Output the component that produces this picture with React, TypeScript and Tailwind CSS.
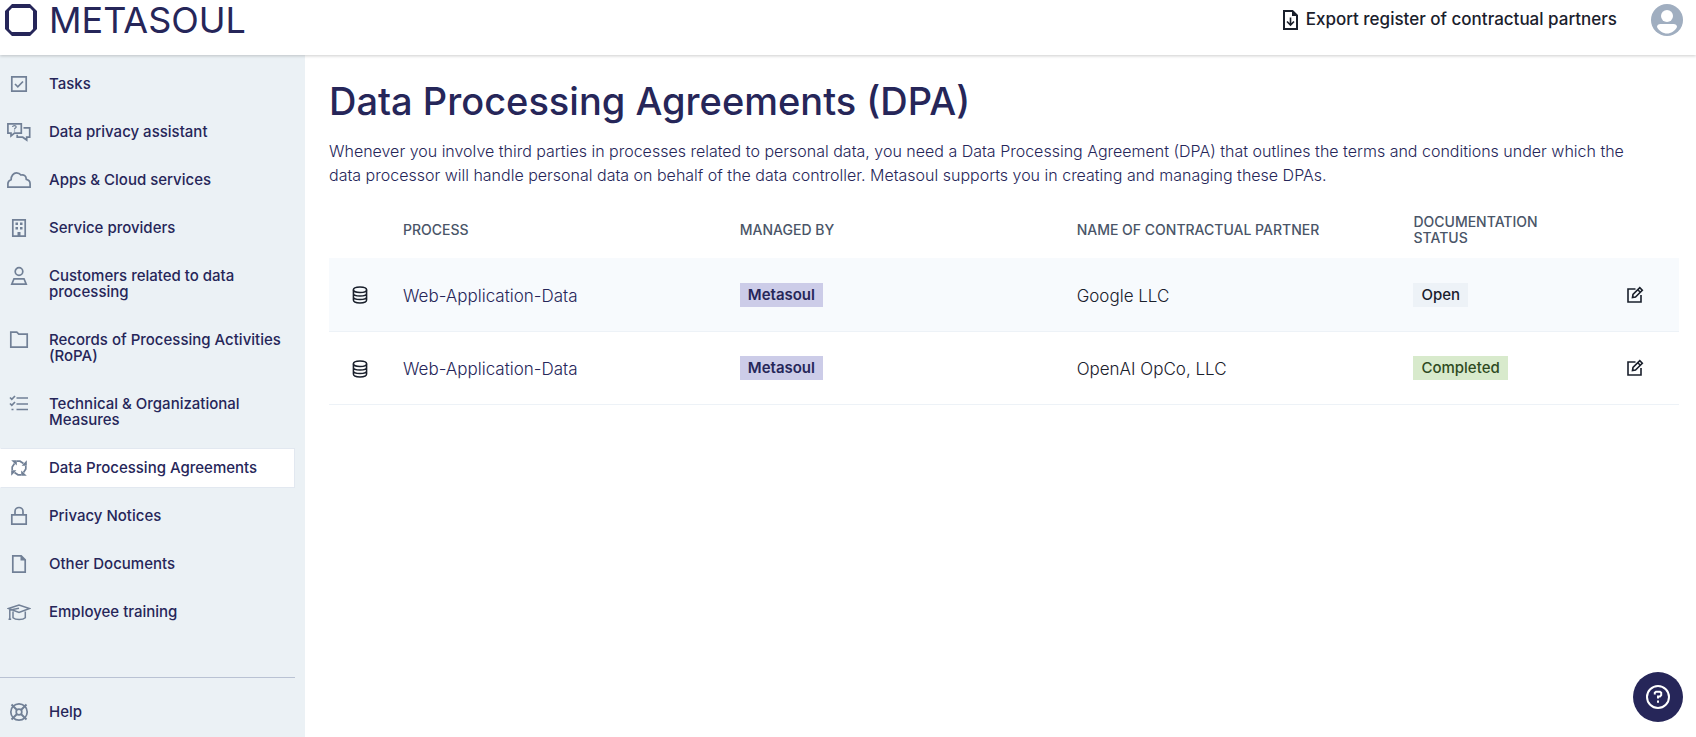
import type { ReactNode } from "react"

type NavItem = { label: string; icon: ReactNode; active?: boolean }

type Agreement = {
  process: string
  managedBy: string
  partner: string
  status: "Open" | "Completed"
}

function Icon({ children }: { children: ReactNode }) {
  return (
    <svg viewBox="0 0 24 24" fill="none" stroke="currentColor" strokeWidth="1.7" className="size-6 shrink-0" aria-hidden="true">
      {children}
    </svg>
  )
}

const navItems: NavItem[] = [
  {
    label: "Tasks",
    icon: (
      <Icon>
        <path d="M4.8 4.8h14.4v14.4H4.8zM8 12l2.8 2.8L16 9.5" />
      </Icon>
    ),
  },
  {
    label: "Data privacy assistant",
    icon: (
      <Icon>
        <path d="M.9 3.8h13.4v9.4H7.5L4 16v-2.8H.9zM16.5 7.8h6.2v9.4h-3V20l-4-2.8h-5.500v-2.500" />
        <path d="M5.600 6.900c0-1.700 3.600-1.700 3.600.1 0 1.100-1.700 1.100-1.700 2.400M7.500 10.400v1.200" strokeWidth="1.200" />
      </Icon>
    ),
  },
  {
    label: "Apps & Cloud services",
    icon: (
      <Icon>
        <path d="M.9 19.200v-3.400c0-2 1.300-3.600 3.200-4.100C3.900 8 6.600 4.800 9.500 4.800c2.100 0 3.500.9 4.500 2.200 3-.8 5.300 1.200 5.300 4.400 2.300.5 3.800 2 3.800 4.300v3.500z" />
      </Icon>
    ),
  },
  {
    label: "Service providers",
    icon: (
      <Icon>
        <path d="M5.800 3.800h12.400v16.400H5.800z" />
        <path d="M8.500 6.500H11V9H8.500zM13 6.500h2.500V9H13zM8.500 11H11v2.500H8.500zM13 11h2.500v2.500H13zM10.500 16h3v4h-3z" fill="currentColor" stroke="none" />
      </Icon>
    ),
  },
  {
    label: "Customers related to data processing",
    icon: (
      <Icon>
        <circle cx="12" cy="7.500" r="3.800" />
        <path d="M7 14.800h10l2.200 5.400H4.800z" />
      </Icon>
    ),
  },
  {
    label: "Records of Processing Activities (RoPA)",
    icon: (
      <Icon>
        <path d="M3.800 4.200h6l2 2h8.400v13H3.800z" />
      </Icon>
    ),
  },
  {
    label: "Technical & Organizational Measures",
    icon: (
      <Icon>
        <path d="M9.500 6H21M9.500 12H21M9.500 17.500H21M3 5.500l1.800 1.800L8 4M3 11.500l1.800 1.800L8 10M4.500 17.500h2" />
      </Icon>
    ),
  },
  {
    label: "Data Processing Agreements",
    active: true,
    icon: (
      <Icon>
        {/* one arrow, repeated at each quarter turn */}
        {[0, 90, 180, 270].map((angle) => (
          <g key={angle} transform={`rotate(${angle} 12 12)`}>
            <path d="M5.200 14v-3l2.300-3.500" />
            <path d="M4.200 4.200h5.600v5.200z" fill="currentColor" stroke="none" />
          </g>
        ))}
      </Icon>
    ),
  },
  {
    label: "Privacy Notices",
    icon: (
      <Icon>
        <path d="M4.800 10.800h14.400v9.400H4.800zM8 10.800V7.500a4 4 0 0 1 8 0v3.300" />
      </Icon>
    ),
  },
  {
    label: "Other Documents",
    icon: (
      <Icon>
        <path d="M5.800 3.800h8.400l4 4v12.400H5.800z" />
        <path d="M13.500 3.500v5h5z" fill="currentColor" stroke="none" />
      </Icon>
    ),
  },
  {
    label: "Employee training",
    icon: (
      <Icon>
        <path d="M1.500 8.500 12 5l10.500 3.500L12 12.500zM12 8.200 2.800 10v9M1.500 19.200h2.700M6 11.500v6.200c2.500 2.400 9.800 2.400 12.300 0v-6.200" strokeWidth="1.500" />
      </Icon>
    ),
  },
]

const agreements: Agreement[] = [
  { process: "Web-Application-Data", managedBy: "Metasoul", partner: "Google LLC", status: "Open" },
  { process: "Web-Application-Data", managedBy: "Metasoul", partner: "OpenAI OpCo, LLC", status: "Completed" },
]

function Header() {
  return (
    <header className="relative z-10 flex h-[55px] items-start justify-between bg-white pr-[13px] pl-[5px] shadow-[0_1px_3px_rgba(0,0,0,0.2)]">
      <a href="#" className="flex h-10 items-center gap-3 text-[#262659]">
        <svg viewBox="0 0 32 32" className="size-8" aria-hidden="true">
          <path fill="currentColor" fillRule="evenodd" d="M7 0h18l7 7v18l-7 7H7l-7-7V7zM7 4 4 7v18l3 3h18l3-3V7l-3-3z" />
        </svg>
        <span className="text-4xl leading-10">METASOUL</span>
      </a>
      <div className="flex h-10 items-center gap-[34px]">
        <button type="button" className="flex items-center gap-2 text-[17px] font-medium text-[#1a202c]">
          <svg viewBox="0 0 15 20" fill="none" stroke="currentColor" strokeWidth="2" className="h-5 w-[15px]" aria-hidden="true">
            <path d="M1 1h8.500L14 5.500V19H1z" />
            <path d="M9 0v6h6z" fill="currentColor" stroke="none" />
            <path d="M7.500 7.500v7M4 11.500l3.500 3.500 3.500-3.500" strokeWidth="1.600" />
          </svg>
          Export register of contractual partners
        </button>
        <button type="button" aria-label="Account">
          <svg viewBox="0 0 32 32" className="size-8" aria-hidden="true">
            <circle cx="16" cy="16" r="16" fill="#a0aec0" />
            <circle cx="16" cy="12" r="6" fill="#fff" />
            <path d="M6 23c0-2 1.500-3 3.500-3h13c2 0 3.500 1 3.500 3-2 4-6 6.500-10 6.500S8 27 6 23z" fill="#fff" />
          </svg>
        </button>
      </div>
    </header>
  )
}

function NavLink({ item }: { item: NavItem }) {
  return (
    <a
      href="#"
      aria-current={item.active ? "page" : undefined}
      className={`flex items-start gap-[18px] border py-[11px] pr-1 pl-[6px] text-[15px] leading-4 font-medium text-[#262659] ${
        item.active ? "border-[#e2e8f0] border-l-transparent bg-white" : "border-transparent"
      }`}
    >
      <span className="-my-1 text-[#718096]">{item.icon}</span>
      {item.label}
    </a>
  )
}

function Sidebar() {
  return (
    <aside className="w-[305px] shrink-0 bg-[#ebf1f5] pt-[9px] pr-[10px]">
      <nav className="flex flex-col gap-2">
        {navItems.map((item) => (
          <NavLink key={item.label} item={item} />
        ))}
      </nav>
      <div className="mt-[45px] border-t border-[#b9c2d3] pt-[14px]">
        <NavLink
          item={{
            label: "Help",
            icon: (
              <Icon>
                <circle cx="12" cy="12" r="8.200" />
                <circle cx="12" cy="12" r="2.800" />
                <path d="m4.500 4.500 5.500 5.500M19.500 4.500 14 10M4.500 19.500 10 14M19.500 19.500 14 14" strokeWidth="2" />
              </Icon>
            ),
          }}
        />
      </div>
    </aside>
  )
}

function AgreementRow({ agreement }: { agreement: Agreement }) {
  return (
    <tr className="h-[73px] border-b border-[#edf2f7] odd:bg-[#f7fafd]">
      <td className="pt-0.5 pl-[22px] text-[#1a202c]">
        <svg viewBox="0 0 18 18" fill="none" stroke="currentColor" strokeWidth="1.500" className="size-[18px]" aria-hidden="true">
          <ellipse cx="9" cy="3.800" rx="6.600" ry="2.800" />
          <path d="M2.400 3.800v10.300c0 3.800 13.200 3.800 13.200 0V3.800M2.400 7.200c0 3.800 13.200 3.800 13.200 0M2.400 10.700c0 3.800 13.200 3.800 13.200 0" />
        </svg>
      </td>
      <td className="px-4 pt-1">
        <a href="#" className="text-[#262659]">{agreement.process}</a>
      </td>
      <td className="px-4">
        <span className="inline-block bg-[#cccce8] px-2 text-[15px] leading-6 font-semibold text-[#262659]">{agreement.managedBy}</span>
      </td>
      <td className="px-4 pt-1 text-[#1a202c]">{agreement.partner}</td>
      <td className="px-4">
        <span
          className={`inline-block px-2 text-[15px] leading-6 font-medium ${
            agreement.status === "Completed" ? "bg-[#d8eacc] text-[#2f4a22]" : "bg-[#edf2f7] text-[#1a202c]"
          }`}
        >
          {agreement.status}
        </span>
      </td>
      <td className="pr-[35px] text-right">
        <button type="button" aria-label="Edit" className="align-middle text-[#1a202c]">
          <svg viewBox="0 0 18 18" fill="none" stroke="currentColor" strokeWidth="1.600" className="size-[18px]" aria-hidden="true">
            <path d="M9.500 3H2v13h13V9" />
            <path d="m6.500 11.500.5-3 6.800-6.800 2.500 2.500-6.800 6.800zM11.800 3.700l2.500 2.500" />
          </svg>
        </button>
      </td>
    </tr>
  )
}

export default function App() {
  return (
    <div className="flex min-h-screen flex-col bg-white font-[Inter,sans-serif]">
      <Header />
      <div className="flex flex-1">
        <Sidebar />
        <main className="min-w-0 flex-1 pt-6 pr-[17px] pl-6">
          <h1 className="text-[38px] leading-[45px] font-medium text-[#262659]">Data Processing Agreements (DPA)</h1>
          <p className="mt-[15px] pr-7 text-base leading-6 font-light text-[#262659]">
            Whenever you involve third parties in processes related to personal data, you need a Data Processing Agreement (DPA) that outlines the terms and conditions under which the data processor will handle personal data on behalf of the data controller. Metasoul supports you in creating and managing these DPAs.
          </p>
          <table className="mt-[13px] w-full table-fixed text-left text-[17px] font-light">
            <thead>
              <tr className="h-[58px] text-sm leading-4 text-[#4a5568] uppercase">
                <td className="w-[58px]" />
                <th scope="col" className="w-[24.95%] px-4 pt-0.5 font-medium">Process</th>
                <th scope="col" className="w-[24.95%] px-4 pt-0.5 font-medium">Managed by</th>
                <th scope="col" className="w-[24.95%] px-4 pt-0.5 font-medium">Name of contractual partner</th>
                <th scope="col" className="px-4 pt-0.5 font-medium">Documentation status</th>
                <td className="w-[110px]" />
              </tr>
            </thead>
            <tbody>
              {agreements.map((agreement) => (
                <AgreementRow key={agreement.partner} agreement={agreement} />
              ))}
            </tbody>
          </table>
        </main>
      </div>
      <button
        type="button"
        aria-label="Open help"
        className="fixed right-[13px] bottom-[15px] flex size-[50px] items-center justify-center rounded-full bg-[#262659] text-white"
      >
        <svg viewBox="0 0 24 24" fill="none" stroke="currentColor" strokeWidth="2" className="size-6" aria-hidden="true">
          <circle cx="12" cy="12" r="11" />
          <path d="M8.800 9.500V7.800L10 6.800h4l1.200 1v2.400L14 11.400h-2v2.200M12 15.500v2.200" />
        </svg>
      </button>
    </div>
  )
}
